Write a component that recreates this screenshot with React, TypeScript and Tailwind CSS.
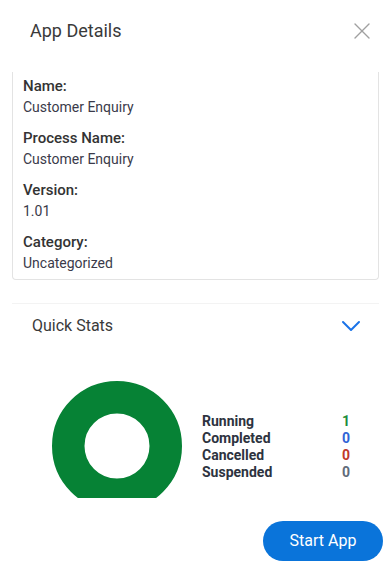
import { X, ChevronDown } from 'lucide-react';

const fields = [
  { label: 'Name:', value: 'Customer Enquiry' },
  { label: 'Process Name:', value: 'Customer Enquiry' },
  { label: 'Version:', value: '1.01' },
  { label: 'Category:', value: 'Uncategorized' },
];

const stats = [
  { label: 'Running', value: 1, color: 'text-[#1e8e3e]' },
  { label: 'Completed', value: 0, color: 'text-[#2f63d6]' },
  { label: 'Cancelled', value: 0, color: 'text-[#c0392b]' },
  { label: 'Suspended', value: 0, color: 'text-[#5f6b7a]' },
];

export default function App() {
  return (
    <div className="min-h-screen w-full bg-white font-['Roboto',sans-serif] text-[#333]">
      {/* Header */}
      <div className="flex items-center justify-between pl-[30px] pr-[11px] pt-[19px]">
        <h2 className="text-[18px] leading-[24px] text-[#3a3a3a]">App Details</h2>
        <button className="text-[#a0a0a0] -my-[2px]">
          <X className="w-[28px] h-[28px]" strokeWidth={1.2} />
        </button>
      </div>

      {/* Details card */}
      <div className="mt-[29px] ml-[12px] mr-[8px] border-x border-b border-[#e3e3e3] rounded-b-[4px] px-[10px] pt-[4px] pb-[6px]">
        {fields.map((f, i) => (
          <div key={f.label} className={i > 0 ? 'mt-[11px]' : ''}>
            <p className="text-[15px] leading-[20px] font-medium text-[#333]">{f.label}</p>
            <p className="mt-px text-[14px] leading-[20px] text-[#3a3a4a]">{f.value}</p>
          </div>
        ))}
      </div>

      {/* Quick Stats */}
      <div className="mt-[23px] ml-[12px] mr-[8px] border-t border-[#f3f3f3]">
        <div className="flex items-center justify-between pl-[20px] pr-[12px] pt-[10px]">
          <span className="text-[16px] leading-[24px] text-[#3a3a3a]">Quick Stats</span>
          <ChevronDown className="w-[32px] h-[32px] -my-[4px] text-[#1a73e8]" strokeWidth={1.5} />
        </div>

        <div className="flex items-start gap-[20px] pl-[40px] pt-[43px]">
          <svg width="130" height="117" viewBox="0 0 130 117">
            <circle cx="65" cy="65" r="48.75" fill="none" stroke="#068235" strokeWidth="32.5" />
          </svg>
          <div className="mt-[32px] w-[148px]">
            {stats.map((s) => (
              <div key={s.label} className="flex justify-between text-[14px] leading-[17px] font-bold">
                <span className="text-[#2d3340]">{s.label}</span>
                <span className={s.color}>{s.value}</span>
              </div>
            ))}
          </div>
        </div>
      </div>

      {/* Footer */}
      <div className="flex justify-end pr-[4px] mt-[23px]">
        <button className="w-[120px] h-[40px] rounded-full bg-[#0a74da] text-white text-[16px]">
          Start App
        </button>
      </div>
    </div>
  );
}
